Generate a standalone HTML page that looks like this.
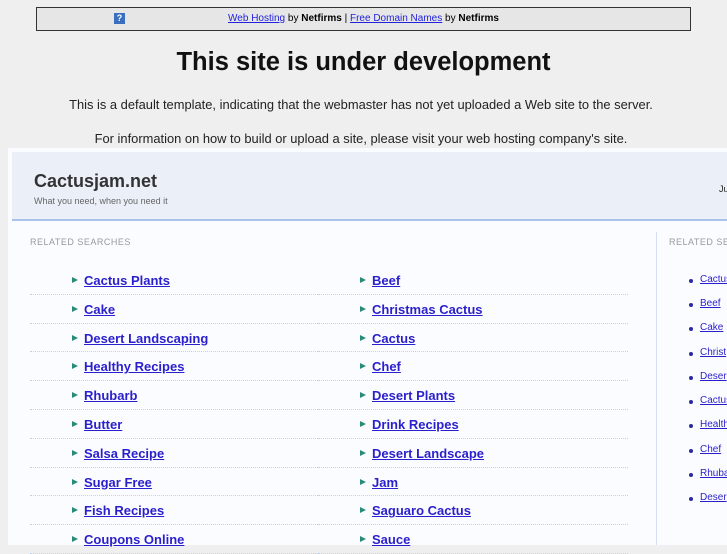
<!DOCTYPE html>
<html><head><style>
body{margin:0;width:727px;height:545px;overflow:hidden;background:#efefef;font-family:"Liberation Sans",sans-serif;position:relative}
.bar{position:absolute;left:36px;top:7px;width:653px;height:22px;border:1px solid #333;background:#e6e6e6;font-size:10px;text-align:center;line-height:22px}
.bar a{color:#2222dd;text-decoration:underline}
.q{position:absolute;left:77px;top:5px;width:11px;height:11px;background:#3a6fc0;color:#fff;font-size:9px;line-height:11px;font-weight:bold}
h1{position:absolute;top:48px;left:0;width:727px;text-align:center;margin:0;font-size:25.5px;font-weight:bold;color:#111}
.p{position:absolute;left:0;width:722px;text-align:center;font-size:12.9px;color:#222}
.panel{position:absolute;left:8px;top:148px;width:719px;height:397px;background:#fbfcff}
.head{position:absolute;left:4px;top:4px;width:715px;height:67px;background:#eaeff8;border-bottom:2px solid #a9c2ea}
.title{position:absolute;left:22px;top:19px;font-size:18px;font-weight:bold;color:#333}
.sub{position:absolute;left:22px;top:44px;font-size:9px;color:#666}
.ju{position:absolute;left:707px;top:32px;font-size:9px;color:#222}
.rs{position:absolute;font-size:9px;color:#999;letter-spacing:.5px;white-space:nowrap}
.vl{position:absolute;left:648px;top:84px;width:1px;height:313px;background:#d5e0f2}
.row{position:absolute;height:28.8px;border-bottom:1px dotted #c4d2e8;box-sizing:border-box}
.row a{position:absolute;left:54px;top:7px;font-size:13px;font-weight:bold;color:#2a1fcc;text-decoration:underline}
.row i{position:absolute;left:42px;top:11px;width:0;height:0;border-left:6px solid #2b8a7a;border-top:3px solid transparent;border-bottom:3px solid transparent}
.side{position:absolute;left:680px;font-size:10px;color:#2a1fcc;text-decoration:underline}
.dot{position:absolute;left:689px;width:4px;height:4px;border-radius:2px;background:#2a2aa0}
</style></head><body>
<div class="bar"><span class="q">?</span><a>Web Hosting</a> by <b>Netfirms</b> | <a>Free Domain Names</a> by <b>Netfirms</b></div>
<h1>This site is under development</h1>
<div class="p" style="top:97px">This is a default template, indicating that the webmaster has not yet uploaded a Web site to the server.</div>
<div class="p" style="top:131px">For information on how to build or upload a site, please visit your web hosting company's site.</div>
<div class="panel">
<div class="head"><div class="title">Cactusjam.net</div><div class="sub">What you need, when you need it</div><div class="ju">Ju</div></div>
<div class="rs" style="left:22px;top:89px">RELATED SEARCHES</div>
<div class="rs" style="left:661px;top:89px">RELATED SE</div>
<div class="vl"></div>
</div>
<div style="position:absolute;left:30px;top:266px">
<div class="row" style="left:0;top:0;width:310px"><i></i><a>Cactus Plants</a></div>
<div class="row" style="left:0;top:28.8px;width:310px"><i></i><a>Cake</a></div>
<div class="row" style="left:0;top:57.6px;width:310px"><i></i><a>Desert Landscaping</a></div>
<div class="row" style="left:0;top:86.4px;width:310px"><i></i><a>Healthy Recipes</a></div>
<div class="row" style="left:0;top:115.2px;width:310px"><i></i><a>Rhubarb</a></div>
<div class="row" style="left:0;top:144px;width:310px"><i></i><a>Butter</a></div>
<div class="row" style="left:0;top:172.8px;width:310px"><i></i><a>Salsa Recipe</a></div>
<div class="row" style="left:0;top:201.6px;width:310px"><i></i><a>Sugar Free</a></div>
<div class="row" style="left:0;top:230.4px;width:310px"><i></i><a>Fish Recipes</a></div>
<div class="row" style="left:0;top:259.2px;width:310px"><i></i><a>Coupons Online</a></div>
<div class="row" style="left:288px;top:0;width:310px"><i></i><a>Beef</a></div>
<div class="row" style="left:288px;top:28.8px;width:310px"><i></i><a>Christmas Cactus</a></div>
<div class="row" style="left:288px;top:57.6px;width:310px"><i></i><a>Cactus</a></div>
<div class="row" style="left:288px;top:86.4px;width:310px"><i></i><a>Chef</a></div>
<div class="row" style="left:288px;top:115.2px;width:310px"><i></i><a>Desert Plants</a></div>
<div class="row" style="left:288px;top:144px;width:310px"><i></i><a>Drink Recipes</a></div>
<div class="row" style="left:288px;top:172.8px;width:310px"><i></i><a>Desert Landscape</a></div>
<div class="row" style="left:288px;top:201.6px;width:310px"><i></i><a>Jam</a></div>
<div class="row" style="left:288px;top:230.4px;width:310px"><i></i><a>Saguaro Cactus</a></div>
<div class="row" style="left:288px;top:259.2px;width:310px"><i></i><a>Sauce</a></div>
</div>
<div class="dot" style="top:279px"></div><a class="side" style="left:700px;top:274px">Cactus</a>
<div class="dot" style="top:303px"></div><a class="side" style="left:700px;top:298px">Beef</a>
<div class="dot" style="top:327px"></div><a class="side" style="left:700px;top:322px">Cake</a>
<div class="dot" style="top:352px"></div><a class="side" style="left:700px;top:347px">Christ</a>
<div class="dot" style="top:376px"></div><a class="side" style="left:700px;top:371px">Deser</a>
<div class="dot" style="top:400px"></div><a class="side" style="left:700px;top:395px">Cactus</a>
<div class="dot" style="top:424px"></div><a class="side" style="left:700px;top:419px">Health</a>
<div class="dot" style="top:449px"></div><a class="side" style="left:700px;top:444px">Chef</a>
<div class="dot" style="top:473px"></div><a class="side" style="left:700px;top:468px">Rhubarb</a>
<div class="dot" style="top:497px"></div><a class="side" style="left:700px;top:492px">Deser</a>
</body></html>
